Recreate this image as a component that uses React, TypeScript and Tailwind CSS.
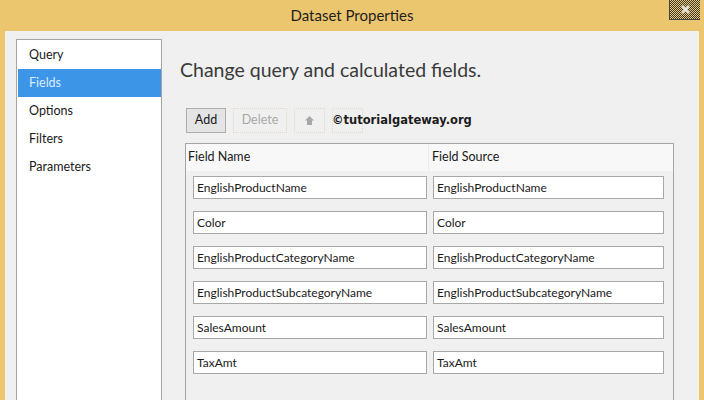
import React from "react";

const rows = [
  "EnglishProductName",
  "Color",
  "EnglishProductCategoryName",
  "EnglishProductSubcategoryName",
  "SalesAmount",
  "TaxAmt",
];

const navItems = ["Query", "Fields", "Options", "Filters", "Parameters"];

export default function App() {
  return (
    <div
      className="w-[704px] h-[400px] overflow-hidden bg-[#ecc56f] flex flex-col"
      style={{ fontFamily: 'Lato, "Noto Sans", sans-serif' }}
    >
      {/* Title bar */}
      <div className="h-[31px] shrink-0 grid grid-cols-[1fr_auto_1fr]">
        <div />
        <div className="text-[15px] leading-[31px] text-[#1e1e1e]">Dataset Properties</div>
        <div className="flex justify-end pr-[4px]">
          <div className="w-[31px] h-[20px] flex items-center justify-center bg-[image:repeating-conic-gradient(#3a3a3a_0_25%,#ecc56f_0_50%)] bg-[length:2px_2px] border-l border-b border-[#444]">
            <svg width="9" height="9" viewBox="0 0 9 9">
              <path d="M1 1 L8 8 M8 1 L1 8" stroke="#e8e8e8" strokeWidth="2" />
            </svg>
          </div>
        </div>
      </div>

      {/* Body */}
      <div className="flex-1 mx-[5px] bg-[#f0f0f0] flex pt-[8px] pl-[11px] min-h-0">
        {/* Nav */}
        <div className="w-[146px] shrink-0 bg-white border border-b-0 border-[#a5a5a5] pl-[1px] pt-[1px] flex flex-col">
          {navItems.map((item) => (
            <div
              key={item}
              className={
                item === "Fields"
                  ? "h-[28px] flex items-center pl-[11px] text-[12.5px] bg-[#3d95e8] text-[#dcecff]"
                  : "h-[28px] flex items-center pl-[11px] text-[12.5px] text-[#1a1a1a]"
              }
            >
              {item}
            </div>
          ))}
        </div>

        {/* Content */}
        <div className="flex-1 flex flex-col pl-[18px] pr-[25px]">
          <div className="mt-[17px] text-[19.5px] leading-[27px] text-[#3a3a3a]">
            Change query and calculated fields.
          </div>

          <div className="mt-[25px] ml-[6px] flex items-center h-[25px]">
            <div className="w-[40px] h-[25px] flex items-center justify-center border border-[#adadad] bg-[#e4e4e4] text-[12.5px] text-[#1a1a1a]">
              Add
            </div>
            <div className="ml-[7px] w-[54px] h-[25px] flex items-center justify-center border border-dotted border-[#e2d8cc] text-[12.5px] text-[#a8a8a8]">
              Delete
            </div>
            <div className="ml-[7px] w-[31px] h-[25px] flex items-center justify-center border border-dotted border-[#e2d8cc]">
              <svg width="9" height="9" viewBox="0 0 9 9">
                <path d="M4.5 0 L9 4.5 H7 V9 H2 V4.5 H0 Z" fill="#a8a8a8" />
              </svg>
            </div>
            <div className="ml-[7px] w-[31px] h-[25px] flex items-center border border-dotted border-[#e2d8cc]">
              <span
                className="-ml-[1px] text-[11.5px] font-bold text-[#1c1c1c] whitespace-nowrap"
                style={{ fontFamily: '"DejaVu Sans", Verdana, sans-serif' }}
              >
                ©tutorialgateway.org
              </span>
            </div>
          </div>

          <div className="mt-[10px] ml-[5px] flex-1 border border-b-0 border-[#a5a5a5] flex flex-col">
            <div className="h-[27px] shrink-0 bg-[#f8f8f8] grid grid-cols-[243px_1fr] text-[12.5px] text-[#1a1a1a]">
              <div className="pl-[2px] flex items-center border-r border-[#ececec]">Field Name</div>
              <div className="pl-[3px] flex items-center">Field Source</div>
            </div>
            <div className="pt-[5px] pl-[7px] grid grid-cols-[234px_231px] gap-x-[6px] gap-y-[12px]">
              {rows.map((r) => (
                <React.Fragment key={r}>
                  <div className="h-[23px] bg-white border border-[#a8a8a8] pl-[3px] flex items-center text-[12px] text-[#1a1a1a]">
                    {r}
                  </div>
                  <div className="h-[23px] bg-white border border-[#a8a8a8] pl-[3px] flex items-center text-[12px] text-[#1a1a1a]">
                    {r}
                  </div>
                </React.Fragment>
              ))}
            </div>
          </div>
        </div>
      </div>
    </div>
  );
}
